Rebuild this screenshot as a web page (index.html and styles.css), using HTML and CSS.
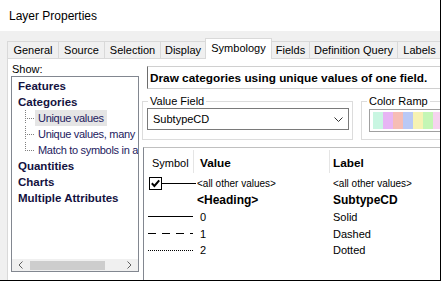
FILE: index.html
```html
<!DOCTYPE html>
<html lang="en">
<head>
    <meta charset="UTF-8">
    <title>Layer Properties</title>
    <link rel="stylesheet" href="styles.css">
</head>
<body>
    <div class="window">
        <div class="titlebar">Layer Properties</div>

        <div class="dialog">
            <div class="tabs">
                <div class="tab tab-general">General</div>
                <div class="tab tab-source">Source</div>
                <div class="tab tab-selection">Selection</div>
                <div class="tab tab-display">Display</div>
                <div class="tab tab-symbology active">Symbology</div>
                <div class="tab tab-fields">Fields</div>
                <div class="tab tab-query">Definition Query</div>
                <div class="tab tab-labels">Labels</div>
            </div>

            <div class="page">
                <!-- left: renderer tree -->
                <div class="show-pane">
                    <div class="show-label">Show:</div>
                    <div class="tree">
                        <ul class="tree-list">
                            <li class="tree-node">Features</li>
                            <li class="tree-node">Categories</li>
                            <li class="tree-branch">
                                <ul>
                                    <li class="tree-leaf"><span class="connector"></span><span class="leaf-text selected">Unique values</span></li>
                                    <li class="tree-leaf"><span class="connector"></span><span class="leaf-text">Unique values, many</span></li>
                                    <li class="tree-leaf"><span class="connector"></span><span class="leaf-text">Match to symbols in a</span></li>
                                </ul>
                            </li>
                            <li class="tree-node">Quantities</li>
                            <li class="tree-node">Charts</li>
                            <li class="tree-node">Multiple Attributes</li>
                        </ul>
                        <div class="hscroll">
                            <div class="scroll-btn">
                                <svg viewBox="0 0 5 8"><path d="M4.5 0.5L1 4l3.5 3.5" fill="none" stroke="currentColor"/></svg>
                            </div>
                            <div class="scroll-track"><div class="scroll-thumb"></div></div>
                            <div class="scroll-btn">
                                <svg viewBox="0 0 5 8"><path d="M0.5 0.5L4 4 0.5 7.5" fill="none" stroke="currentColor"/></svg>
                            </div>
                        </div>
                    </div>
                </div>

                <!-- right: unique values renderer -->
                <div class="main-pane">
                    <div class="banner">Draw categories using unique values of one field.</div>

                    <div class="groups">
                        <fieldset class="group group-field">
                            <legend>Value Field</legend>
                            <div class="select">
                                <span>SubtypeCD</span>
                                <svg class="chevron" viewBox="0 0 9 5"><path d="M0.5 0.5l4 4 4-4" fill="none" stroke="currentColor"/></svg>
                            </div>
                        </fieldset>
                        <fieldset class="group group-ramp">
                            <legend>Color Ramp</legend>
                            <div class="ramp">
                                <span class="swatch s1"></span>
                                <span class="swatch s2"></span>
                                <span class="swatch s3"></span>
                                <span class="swatch s4"></span>
                                <span class="swatch s5"></span>
                                <span class="swatch s6"></span>
                                <span class="swatch s7"></span>
                            </div>
                        </fieldset>
                    </div>

                    <div class="values-table">
                        <div class="vt-head">
                            <div class="th th-symbol">Symbol</div>
                            <div class="th th-value">Value</div>
                            <div class="th th-label">Label</div>
                        </div>
                        <div class="vt-row">
                            <div class="sym sym-check">
                                <svg class="checkbox" viewBox="0 0 13 13">
                                    <rect x="0.5" y="0.5" width="12" height="12" fill="#fff" stroke="#000"/>
                                    <path d="M2.8 6.3l2.6 2.7 4.8-5.6" fill="none" stroke="#000" stroke-width="2"/>
                                </svg>
                                <span class="check-line"></span>
                            </div>
                            <div class="val small">&lt;all other values&gt;</div>
                            <div class="lbl small">&lt;all other values&gt;</div>
                        </div>
                        <div class="vt-row">
                            <div class="sym"></div>
                            <div class="val bold">&lt;Heading&gt;</div>
                            <div class="lbl bold">SubtypeCD</div>
                        </div>
                        <div class="vt-row">
                            <div class="sym"><svg class="line" viewBox="0 0 45 3"><line x1="0" y1="1.5" x2="45" y2="1.5" stroke="#000"/></svg></div>
                            <div class="val num">0</div>
                            <div class="lbl">Solid</div>
                        </div>
                        <div class="vt-row">
                            <div class="sym"><svg class="line" viewBox="0 0 45 3"><line x1="0" y1="1.5" x2="45" y2="1.5" stroke="#000" stroke-dasharray="8 6"/></svg></div>
                            <div class="val num">1</div>
                            <div class="lbl">Dashed</div>
                        </div>
                        <div class="vt-row">
                            <div class="sym"><svg class="line" viewBox="0 0 45 3"><line x1="0" y1="1.5" x2="45" y2="1.5" stroke="#000" stroke-dasharray="1 1"/></svg></div>
                            <div class="val num">2</div>
                            <div class="lbl">Dotted</div>
                        </div>
                    </div>
                </div>
            </div>
        </div>
    </div>
</body>
</html>
```

FILE: styles.css
```css
* {
    margin: 0;
    padding: 0;
    box-sizing: border-box;
}

body {
    font-family: "Liberation Sans", Arial, sans-serif;
    font-size: 11px;
    color: #000;
    background-color: #fff;
}

.window {
    width: 441px;
    height: 281px;
    border-right: 1px solid #000;
    border-bottom: 1px solid #000;
    overflow: hidden;
    display: flex;
    flex-direction: column;
}

.titlebar {
    height: 31px;
    flex: none;
    padding-left: 9px;
    font-size: 12px;
    display: flex;
    align-items: center;
    background-color: #fff;
}

.dialog {
    flex: 1;
    min-height: 0;
    background-color: #f0f0f0;
    padding: 7px 0 0 7px;
    display: flex;
    flex-direction: column;
}

/* tab strip */
.tabs {
    display: flex;
    align-items: flex-end;
    height: 20px;
    flex: none;
}

.tab {
    flex: none;
    height: 17px;
    margin-right: -1px;
    border: 1px solid #d9d9d9;
    border-bottom: none;
    background-color: #f0f0f0;
    text-align: center;
    line-height: 16px;
    white-space: nowrap;
}

.tab.active {
    height: 21px;
    margin-bottom: -1px;
    line-height: 19px;
    background-color: #fff;
    position: relative;
    z-index: 1;
}

.tab-general { width: 52px; }
.tab-source { width: 47px; }
.tab-selection { width: 57px; }
.tab-display { width: 46px; }
.tab-symbology { width: 67px; }
.tab-fields { width: 39px; }
.tab-query { width: 89px; }
.tab-labels { width: 45px; }

.page {
    flex: 1;
    min-height: 0;
    display: flex;
    background-color: #fff;
    border-top: 1px solid #d9d9d9;
    border-left: 1px solid #d9d9d9;
    overflow: hidden;
}

/* left pane */
.show-pane {
    flex: none;
    width: 134px;
    padding: 3px 0 0 3px;
}

.show-label {
    height: 14px;
    line-height: 14px;
    margin-left: 1px;
}

.tree {
    width: 128px;
    height: 196px;
    border: 1px solid #828790;
    display: flex;
    flex-direction: column;
    overflow: hidden;
}

.tree-list {
    flex: 1;
    list-style: none;
    padding: 1px 0 0 6px;
    color: #14123f;
    white-space: nowrap;
}

.tree-node {
    height: 16px;
    line-height: 16px;
    font-size: 11.5px;
    font-weight: bold;
}

.tree-branch ul {
    list-style: none;
    padding-left: 7px;
}

.tree-leaf {
    display: flex;
    height: 16px;
}

.connector {
    flex: none;
    width: 10px;
    background-image:
        repeating-linear-gradient(to bottom, #808080 0 1px, transparent 1px 2px),
        repeating-linear-gradient(to right, #808080 0 1px, transparent 1px 2px);
    background-size: 1px 100%, 100% 1px;
    background-position: 0 -2px, 0 8px;
    background-repeat: no-repeat;
}

.tree-leaf:last-child .connector {
    background-size: 1px 10px, 100% 1px;
}

.leaf-text {
    padding: 0 3px;
    line-height: 16px;
    letter-spacing: -0.3px;
    color: #231a5e;
}

.leaf-text.selected {
    background-color: #e5e5e5;
}

.hscroll {
    flex: none;
    height: 12px;
    display: flex;
    align-items: stretch;
    background-color: #f0f0f0;
}

.scroll-btn {
    width: 17px;
    flex: none;
    display: flex;
    align-items: center;
    justify-content: center;
    color: #606060;
}

.scroll-btn svg {
    width: 5px;
    height: 8px;
}

.scroll-track {
    flex: 1;
    padding: 2px 16px 1px 1px;
}

.scroll-thumb {
    width: 75px;
    height: 100%;
    background-color: #cdcdcd;
}

/* right pane */
.main-pane {
    flex: none;
    width: 320px;
    padding-top: 7px;
    display: flex;
    flex-direction: column;
}

.banner {
    margin-left: 5px;
    height: 23px;
    padding-left: 2px;
    border: 1px solid #d0d0d0;
    border-left-color: #6d6d6d;
    background-color: #fff;
    font-size: 11.8px;
    font-weight: bold;
    display: flex;
    align-items: center;
    white-space: nowrap;
}

.groups {
    display: flex;
    gap: 8px;
    margin-top: 6px;
}

.group {
    border: 1px solid #dcdcdc;
    padding: 0 3px 7px 4px;
    min-width: 0;
}

.group legend {
    margin-left: 1px;
    padding: 0 2px;
    line-height: 13px;
}

.group-field {
    flex: none;
    width: 211px;
}

.group-ramp {
    flex: 1;
    padding-left: 7px;
}

.group-ramp legend {
    margin-left: -2px;
}

.select {
    height: 22px;
    border: 1px solid #7a7a7a;
    background-color: #fff;
    padding: 0 5px;
    display: flex;
    align-items: center;
    justify-content: space-between;
}

.chevron {
    width: 9px;
    height: 5px;
    color: #333;
}

.ramp {
    height: 23px;
    margin-top: 1px;
    padding: 2px 3px;
    border: 1px solid #a0a0a0;
    background-color: #fff;
    display: flex;
}

.swatch {
    width: 10px;
    flex: none;
}

.s1 { background-color: #c9f6e2; }
.s2 { background-color: #e7b5f4; }
.s3 { background-color: #f6bdb5; }
.s4 { background-color: #b9c9f6; }
.s5 { background-color: #f6f2b3; }
.s6 { background-color: #c4f6b5; }
.s7 { background-color: #f6d3ef; }

/* symbol / value / label list */
.values-table {
    flex: 1;
    margin: 7px 0 0 1px;
    background-color: #fff;
    border-top: 1px solid #c0c0c0;
    border-left: 1px solid #828790;
}

.vt-head,
.vt-row {
    display: grid;
    grid-template-columns: 50px 136px 1fr;
}

.vt-head {
    height: 27px;
    padding: 2px 0;
}

.th {
    display: flex;
    align-items: center;
    padding-top: 3px;
    border-right: 1px solid #e5e5e5;
    white-space: nowrap;
}

.th-symbol { padding-left: 8px; }

.th-value,
.th-label {
    font-size: 11.8px;
    font-weight: bold;
}

.th-value { padding-left: 6px; }

.th-label {
    padding-left: 3px;
    border-right: none;
}

.vt-row {
    height: 16.75px;
    align-items: center;
    white-space: nowrap;
}

.sym {
    display: flex;
    align-items: center;
    padding-left: 4px;
}

.sym-check {
    padding-left: 5px;
}

.checkbox {
    width: 13px;
    height: 13px;
    flex: none;
}

.check-line {
    flex: 1;
    height: 1px;
    margin-right: -2px;
    background-color: #000;
}

.line {
    width: 45px;
    height: 3px;
}

.val,
.lbl {
    padding-left: 3px;
}

.val.num {
    padding-left: 6px;
}

.small {
    font-size: 10px;
}

.bold {
    font-size: 12px;
    font-weight: bold;
}
```
